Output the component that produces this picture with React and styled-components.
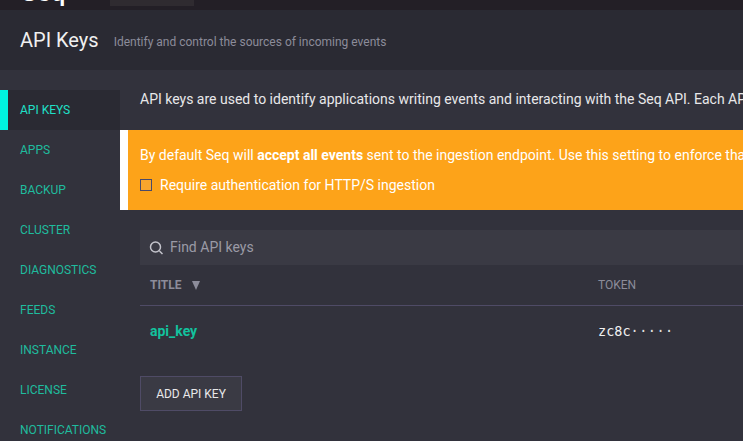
import React from "react";
import styled, { createGlobalStyle } from "styled-components";

const GlobalStyle = createGlobalStyle`
    html, body {
        margin: 0;
        height: 100%;
        background: #32323c;
        overflow: hidden;
    }
    * {
        box-sizing: border-box;
    }
`;

const NAV_ITEMS = [
    "API KEYS",
    "APPS",
    "BACKUP",
    "CLUSTER",
    "DIAGNOSTICS",
    "FEEDS",
    "INSTANCE",
    "LICENSE",
    "NOTIFICATIONS",
];

const SearchIcon = () => (
    <svg width="16" height="16" viewBox="0 0 16 16" fill="none">
        <circle cx="6.5" cy="7" r="5" stroke="#c4c4cc" strokeWidth="1.5" />
        <path d="M10.5 11l3 3" stroke="#c4c4cc" strokeWidth="1.5" />
    </svg>
);

const App = () => {
    return (
        <Page>
            <GlobalStyle />
            <TopBar>
                <Logo>Seq</Logo>
                <TopSearch />
            </TopBar>
            <Header>
                <Title>API Keys</Title>
                <Subtitle>Identify and control the sources of incoming events</Subtitle>
            </Header>
            <Body>
                <Sidebar>
                    {NAV_ITEMS.map((item, i) => (
                        <NavItem key={item} $active={i === 0}>
                            {item}
                        </NavItem>
                    ))}
                </Sidebar>
                <Main>
                    <Intro>
                        API keys are used to identify applications writing events and interacting with the Seq API. Each API key has its own permissions.
                    </Intro>
                    <Banner>
                        <BannerText>
                            By default Seq will <strong>accept all events</strong> sent to the ingestion endpoint. Use this setting to enforce that only authenticated clients can write events.
                        </BannerText>
                        <CheckRow>
                            <CheckBox />
                            Require authentication for HTTP/S ingestion
                        </CheckRow>
                    </Banner>
                    <Content>
                        <Filter>
                            <SearchIcon />
                            <FilterText>Find API keys</FilterText>
                        </Filter>
                        <TableHead>
                            <TitleHead>
                                TITLE <SortArrow />
                            </TitleHead>
                            <TokenHead>TOKEN</TokenHead>
                        </TableHead>
                        <Row>
                            <KeyName>api_key</KeyName>
                            <Token>
                                zc8c<Dots>·····</Dots>
                            </Token>
                        </Row>
                        <AddButton>ADD API KEY</AddButton>
                    </Content>
                </Main>
            </Body>
        </Page>
    );
};

const Page = styled.div`
    width: 743px;
    height: 441px;
    overflow: hidden;
    font-family: Roboto, "Liberation Sans", sans-serif;
    background: #32323c;
`;

const TopBar = styled.div`
    height: 10px;
    background: #231f26;
    display: flex;
    overflow: hidden;
    padding-left: 21px;
`;

const Logo = styled.div`
    width: 89px;
    margin-top: -23px;
    font-size: 26px;
    line-height: 30px;
    font-weight: 500;
    color: #ffffff;
`;

const TopSearch = styled.div`
    width: 84px;
    height: 6px;
    background: #2f2b30;
`;

const Header = styled.div`
    height: 60px;
    background: #2a2a33;
    padding-left: 20px;
    display: flex;
    align-items: center;
`;

const Title = styled.h1`
    margin: 0 15px 0 0;
    font-size: 20px;
    font-weight: 400;
    color: #f0f0f0;
`;

const Subtitle = styled.span`
    font-size: 12px;
    color: #8c8c9a;
    padding-top: 3px;
`;

const Body = styled.div`
    display: flex;
    padding-top: 20px;
`;

const Sidebar = styled.nav`
    width: 120px;
    flex: none;
`;

const NavItem = styled.div`
    height: 40px;
    display: flex;
    align-items: center;
    padding-left: ${(p) => (p.$active ? "12px" : "20px")};
    font-size: 12px;
    white-space: nowrap;
    color: ${(p) => (p.$active ? "#1fe0c8" : "#1fbc9e")};
    background: ${(p) => (p.$active ? "#2a2a33" : "transparent")};
    border-left: ${(p) => (p.$active ? "8px solid #00f5e0" : "none")};
`;

const Main = styled.main`
    flex: 1;
    min-width: 0;
    overflow: hidden;
`;

const Intro = styled.p`
    height: 40px;
    margin: 0;
    padding: 0 0 0 20px;
    font-size: 14px;
    line-height: 18px;
    color: #e8e8ea;
    white-space: nowrap;
`;

const Banner = styled.section`
    height: 80px;
    background: #fda319;
    border-left: 8px solid #ffffff;
    padding: 16px 0 0 12px;
    color: #ffffff;
    font-size: 14px;
    white-space: nowrap;
`;

const BannerText = styled.div`
    line-height: 18px;
`;

const CheckRow = styled.label`
    display: flex;
    align-items: center;
    gap: 8px;
    margin-top: 12px;
    line-height: 18px;
`;

const CheckBox = styled.span`
    width: 12px;
    height: 12px;
    background: #f9a52d;
    border: 1px solid #4a4a6a;
`;

const Content = styled.div`
    padding: 20px 0 0 20px;
`;

const Filter = styled.div`
    height: 35px;
    background: #3a3a44;
    display: flex;
    align-items: center;
    gap: 5px;
    padding-left: 9px;
`;

const FilterText = styled.span`
    font-size: 14px;
    padding-bottom: 2px;
    color: #9a9aa6;
`;

const TableHead = styled.div`
    height: 41px;
    display: flex;
    align-items: center;
    border-bottom: 1px solid #4f4b66;
    padding-left: 10px;
    font-size: 12px;
    color: #8c8c9a;
`;

const TitleHead = styled.div`
    width: 448px;
    font-weight: 700;
    display: flex;
    align-items: center;
    gap: 11px;
`;

const SortArrow = styled.span`
    width: 0;
    height: 0;
    border-left: 4.5px solid transparent;
    border-right: 4.5px solid transparent;
    border-top: 9px solid #8c8c9a;
`;

const TokenHead = styled.div`
    font-weight: 400;
`;

const Row = styled.div`
    height: 50px;
    display: flex;
    align-items: center;
    padding-left: 10px;
`;

const KeyName = styled.div`
    width: 448px;
    font-size: 14px;
    font-weight: 700;
    color: #12c29e;
`;

const Token = styled.div`
    font-family: "DejaVu Sans Mono", monospace;
    font-size: 13.5px;
    color: #f0f0f0;
`;

const Dots = styled.span`
    letter-spacing: 0.5px;
    color: #e0e0e0;
`;

const AddButton = styled.button`
    display: block;
    width: 102px;
    height: 35px;
    margin-top: 20px;
    padding: 0;
    background: #3a3a44;
    border: 1px solid #4f4b66;
    color: #e8e8ea;
    font-family: inherit;
    font-size: 12px;
`;

export default App;
